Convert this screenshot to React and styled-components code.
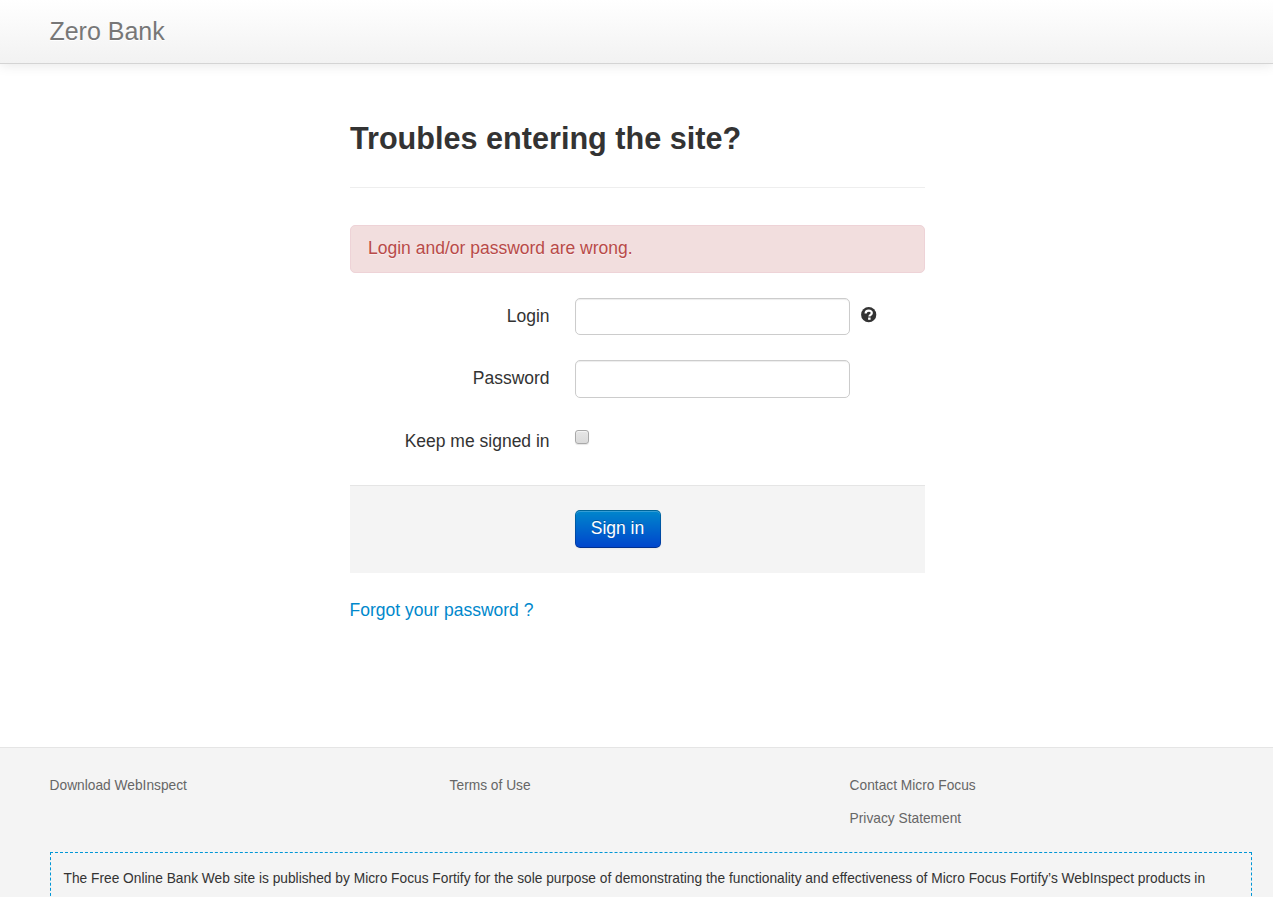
import React from "react";
import styled, { createGlobalStyle } from "styled-components";

const GlobalStyle = createGlobalStyle`
  * { box-sizing: border-box; }
  html, body { margin: 0; height: 897px; overflow: hidden; }
  body {
    background: #fff;
    color: #333;
    font: 17.5px/25px "Liberation Sans", Arial, sans-serif;
  }
`;

const Page = styled.div`
  height: 897px;
  display: flex;
  flex-direction: column;
  overflow: hidden;
`;

const Navbar = styled.header`
  flex: none;
  height: 64px;
  padding: 0 49.4px;
  display: flex;
  align-items: center;
  background: linear-gradient(to bottom, #fff, #f2f2f2);
  border-bottom: 1px solid #d4d4d4;
  box-shadow: 0 1px 12px rgba(0, 0, 0, 0.1);
`;

const Brand = styled.a`
  color: #777;
  font-size: 25px;
  line-height: 25px;
  text-shadow: 0 1px 0 #fff;
`;

const Main = styled.main`
  flex: none;
  width: 575px;
  height: 683px;
  margin-left: 350px;
  padding-top: 49px;
`;

const PageHeader = styled.div`
  height: 75px;
  border-bottom: 1px solid #eee;
`;

const Title = styled.h3`
  margin: 0;
  font-size: 30.625px;
  line-height: 50px;
  white-space: nowrap;
`;

const Alert = styled.div`
  height: 48px;
  margin: 37px 0 25px;
  padding: 10px 17px;
  color: #b94a48;
  background: #f2dede;
  border: 1px solid #eed3d7;
  border-radius: 5px;
  text-shadow: 0 1px 0 rgba(255, 255, 255, 0.5);
`;

const ControlGroup = styled.div`
  display: flex;
  align-items: flex-start;
  height: ${(p) => p.$height}px;
`;

const Label = styled.label`
  width: 199.6px;
  margin-right: 25.4px;
  padding-top: 6px;
  text-align: right;
`;

const Input = styled.input`
  width: 275px;
  height: ${(p) => p.$height}px;
  padding: 5px 7px;
  border: 1px solid #ccc;
  border-radius: 5px;
  background: #fff;
  box-shadow: inset 0 1px 1px rgba(0, 0, 0, 0.075);
  font: inherit;
  outline: none;
`;

const HelpIcon = styled.svg`
  width: 16px;
  height: 16px;
  margin: 9px 0 0 11px;
`;

const Checkbox = styled.input`
  appearance: none;
  width: 14px;
  height: 14px;
  margin: 7px 0 0;
  border: 1px solid #a9a9a9;
  border-radius: 3px;
  background: linear-gradient(to bottom, #e6e6e6, #dadada);
  box-shadow: 0 1px 1px rgba(0, 0, 0, 0.1), inset 0 1px 1px rgba(255, 255, 255, 0.6);
`;

const FormActions = styled.div`
  height: 88px;
  padding: 24px 0 0 225px;
  background: #f4f4f4;
  border-top: 1px solid #e5e5e5;
`;

const SubmitButton = styled.button`
  display: block;
  width: 86px;
  height: 38px;
  padding: 0 1px 2px 0;
  color: #fff;
  font: 17.5px/25px "Liberation Sans", Arial, sans-serif;
  text-shadow: 0 -1px 0 rgba(0, 0, 0, 0.25);
  background: linear-gradient(to bottom, #08c, #04c) border-box;
  border: 1px solid;
  border-color: rgba(0, 0, 0, 0.25) rgba(0, 0, 0, 0.2) rgba(0, 0, 0, 0.3);
  border-radius: 5px;
  box-shadow: inset 0 1px 0 rgba(255, 255, 255, 0.2), 0 1px 2px rgba(0, 0, 0, 0.05);
`;

const ForgotLink = styled.a`
  display: block;
  margin: 25px 0 0 -0.4px;
  color: #08c;
`;

const Footer = styled.footer`
  flex: 1;
  padding: 25px 21px 0 50px;
  background: #f4f4f4;
  border-top: 1px solid #e5e5e5;
  font-size: 13.75px;
`;

const LinkColumns = styled.div`
  display: grid;
  grid-template-columns: 400px 400px 1fr;
  height: 79px;
  margin-left: -0.4px;
`;

const LinkList = styled.ul`
  margin: 0;
  padding: 0;
  list-style: none;
`;

const LinkItem = styled.li`
  height: 33px;
  color: #666;
  line-height: 25px;
`;

const Disclaimer = styled.div`
  width: 1202px;
  height: 90px;
  padding: 13px 12.5px;
  border: 1px dashed #0096d6;
  line-height: 25px;
  white-space: nowrap;
`;

const columns = [
  ["Download WebInspect"],
  ["Terms of Use"],
  ["Contact Micro Focus", "Privacy Statement"],
];

export default function App() {
  return (
    <Page>
      <GlobalStyle />
      <Navbar>
        <Brand>Zero Bank</Brand>
      </Navbar>
      <Main>
        <PageHeader>
          <Title>Troubles entering the site?</Title>
        </PageHeader>
        <Alert>Login and/or password are wrong.</Alert>
        <ControlGroup $height={62}>
          <Label htmlFor="login">Login</Label>
          <Input id="login" type="text" $height={37} />
          <HelpIcon viewBox="0 0 16 16" aria-label="Help">
            <circle cx="7.7" cy="7.7" r="7.6" fill="#333" />
            <path d="M4.6 6.4C4.6 4.5 6 3.7 7.8 3.7s3 .9 3 2.3c0 1.8-2.4 1.8-2.4 3.6" fill="none" stroke="#fff" strokeWidth="2.2" />
            <path d="M7.1 10.5h2.5v2.3H7.1z" fill="#fff" />
          </HelpIcon>
        </ControlGroup>
        <ControlGroup $height={63}>
          <Label htmlFor="password">Password</Label>
          <Input id="password" type="password" $height={38} />
        </ControlGroup>
        <ControlGroup $height={62}>
          <Label htmlFor="remember">Keep me signed in</Label>
          <Checkbox id="remember" type="checkbox" />
        </ControlGroup>
        <FormActions>
          <SubmitButton type="button">Sign in</SubmitButton>
        </FormActions>
        <ForgotLink>Forgot your password ?</ForgotLink>
      </Main>
      <Footer>
        <LinkColumns>
          {columns.map((items) => (
            <LinkList key={items[0]}>
              {items.map((item) => (
                <LinkItem key={item}>{item}</LinkItem>
              ))}
            </LinkList>
          ))}
        </LinkColumns>
        <Disclaimer>
          The Free Online Bank Web site is published by Micro Focus Fortify for the sole purpose of demonstrating the functionality and effectiveness of Micro Focus Fortify’s WebInspect products in
        </Disclaimer>
      </Footer>
    </Page>
  );
}
